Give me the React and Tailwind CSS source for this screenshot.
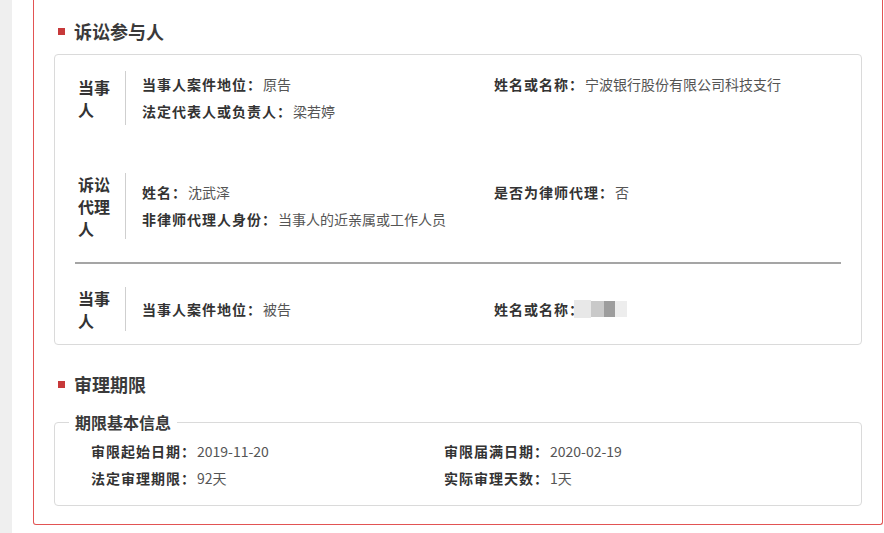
import React from "react";

const font = { fontFamily: '"Noto Sans CJK SC", "Noto Sans", sans-serif' };

function Title({ children }) {
  return (
    <div className="flex items-center h-[24px] pl-[24px]">
      <span className="w-[7px] h-[7px] bg-[#c7393a] mr-[9px]" />
      <span className="text-[18px] leading-[24px] font-bold text-[#3a3a3a]">{children}</span>
    </div>
  );
}

function Field({ k, v, children }) {
  return (
    <div className="h-[27px] leading-[27px] text-[14px] whitespace-nowrap flex items-center">
      <span className="font-bold text-[#333] tracking-[1px]">{k}：</span>
      {v !== undefined && <span className="text-[#555] ml-[1px]">{v}</span>}
      {children}
    </div>
  );
}

function Row({ label, left, right, className = "" }) {
  return (
    <div className={"flex items-stretch pl-[23px] " + className}>
      <div className="w-[48px] shrink-0 border-r border-[#cfcfcf] flex items-center">
        <div className="w-[32px] text-[16px] leading-[22px] font-bold text-[#333]">{label}</div>
      </div>
      <div className="flex-1 pl-[16px] flex flex-col justify-center">
        <div className="flex">
          <div className="w-[352px] shrink-0">{left[0]}</div>
          <div>{right[0]}</div>
        </div>
        {left[1] && (
          <div className="flex">
            <div className="w-[352px] shrink-0">{left[1]}</div>
            <div>{right[1]}</div>
          </div>
        )}
      </div>
    </div>
  );
}

export default function App() {
  return (
    <div className="flex w-[884px] h-[533px] bg-white overflow-hidden" style={font}>
      <div className="w-[12px] shrink-0 bg-[#efefef]" />
      <div className="ml-[21px] w-[850px] self-start border border-t-0 border-[#e25454] rounded-b-[3px] pt-[19px] pb-[18px]">
        <Title>诉讼参与人</Title>
        <div className="mt-[11px] mx-[20px] border border-[#dadada] rounded-[4px] pt-[16px] pb-[13px]">
          <Row
            label="当事人"
            left={[
              <Field k="当事人案件地位" v="原告" />,
              <Field k="法定代表人或负责人" v="梁若婷" />,
            ]}
            right={[<Field k="姓名或名称" v="宁波银行股份有限公司科技支行" />, null]}
          />
          <Row
            className="mt-[48px]"
            label="诉讼代理人"
            left={[
              <Field k="姓名" v="沈武泽" />,
              <Field k="非律师代理人身份" v="当事人的近亲属或工作人员" />,
            ]}
            right={[<Field k="是否为律师代理" v="否" />, null]}
          />
          <div className="mt-[23px] mx-[20px] h-[2px] bg-[#a5a5a5]" />
          <Row
            className="mt-[23px]"
            label="当事人"
            left={[<Field k="当事人案件地位" v="被告" />]}
            right={[
              <Field k="姓名或名称">
                <span className="relative inline-flex items-center -ml-[10px] h-[20px]">
                  <span className="w-[17px] h-[18px] bg-[#e2e2e2] opacity-80" />
                  <span className="w-[13px] h-[16px] bg-[#c9c9c9]" />
                  <span className="w-[11px] h-[16px] bg-[#9d9d9d]" />
                  <span className="w-[12px] h-[16px] bg-[#ededed]" />
                </span>
              </Field>,
            ]}
          />
        </div>
        <div className="mt-[27px]">
          <Title>审理期限</Title>
        </div>
        <fieldset className="mt-[16px] mx-[20px] border border-[#dadada] rounded-[4px] pb-[13px]">
          <legend className="ml-[14px] px-[6px] text-[16px] leading-[20px] font-bold text-[#3a3a3a]">期限基本信息</legend>
          <div className="pl-[36px] pt-[6px]">
            <div className="flex">
              <div className="w-[353px] shrink-0"><Field k="审限起始日期" v="2019-11-20" /></div>
              <div><Field k="审限届满日期" v="2020-02-19" /></div>
            </div>
            <div className="flex">
              <div className="w-[353px] shrink-0"><Field k="法定审理期限" v="92天" /></div>
              <div><Field k="实际审理天数" v="1天" /></div>
            </div>
          </div>
        </fieldset>
      </div>
    </div>
  );
}
